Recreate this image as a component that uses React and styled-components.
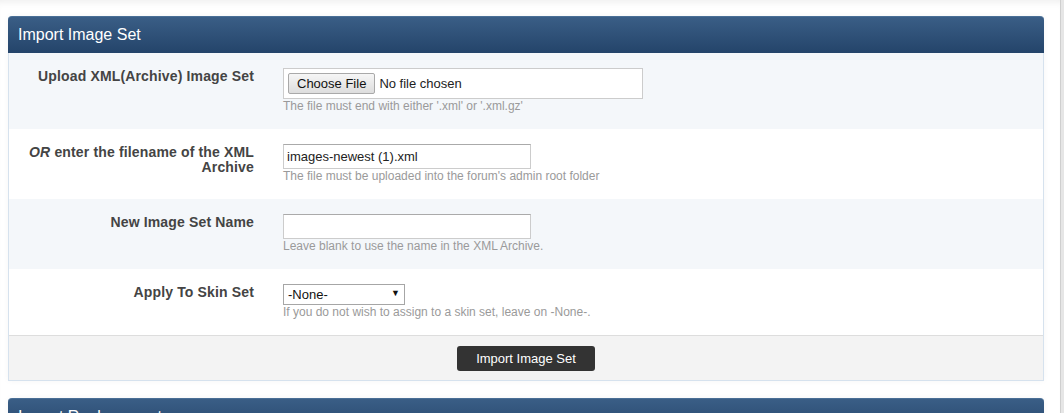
import styled, { createGlobalStyle } from "styled-components";

const GlobalStyle = createGlobalStyle`
  html, body {
    margin: 0;
    padding: 0;
    background: #fff;
    font-family: "Liberation Sans", Arial, sans-serif;
    color: #333;
  }
  * {
    box-sizing: border-box;
  }
`;

const Page = styled.div`
  display: flex;
  height: 413px;
  overflow: hidden;
`;

const Main = styled.main`
  flex: 1;
  padding: 16px 16px 0 8px;
  box-shadow: inset 0 7px 7px -5px rgba(0, 0, 0, 0.07);
`;

const ScrollStrip = styled.div`
  width: 4px;
  background: #e6e6e6;
  border-left: 1px solid #cfcfcf;
`;

const Panel = styled.section`
  border: 1px solid #d6e2ee;
  border-top: 0;
  border-radius: 4px 4px 0 0;
  margin-bottom: 17px;
  box-shadow: 0 0 6px rgba(0, 0, 0, 0.04);
  background: #fff;
`;

const PanelHeader = styled.h2`
  margin: 0 -1px;
  height: 37px;
  padding: 0 10px;
  display: flex;
  align-items: center;
  font-size: 16px;
  font-weight: normal;
  color: #fff;
  border-radius: 4px 4px 0 0;
  border-top: 1px solid #4a6f96;
  background: linear-gradient(#3a5e86, #24446a);
`;

const Row = styled.div`
  display: grid;
  grid-template-columns: 260px 1fr;
  background: ${(p) => (p.$alt ? "#f4f7fa" : "#fff")};
  padding: 15px 0;
`;

const Label = styled.div`
  text-align: right;
  padding: 1px 15px 0 0;
  font-size: 14px;
  line-height: 15px;
  font-weight: bold;
  letter-spacing: 0.15px;
  color: #444;

  em {
    font-style: italic;
  }
`;

const Field = styled.div`
  padding-left: 14px;
`;

const Desc = styled.div`
  font-size: 12px;
  line-height: 15px;
  color: #9a9a9a;
`;

const FileBox = styled.div`
  width: 360px;
  height: 31px;
  border: 1px solid #ccc;
  background: #fff;
  display: flex;
  align-items: center;
  padding: 0 4px;
  font-size: 13px;
  color: #222;
`;

const ChooseButton = styled.span`
  display: inline-flex;
  align-items: center;
  height: 21px;
  padding: 0 8px;
  border: 1px solid #a9a9a9;
  border-radius: 2px;
  background: linear-gradient(#f6f6f6, #dddddd);
  color: #111;
  margin-right: 4px;
`;

const TextInput = styled.input`
  display: block;
  width: 248px;
  height: 25px;
  border: 1px solid #ccc;
  border-top-color: #aaa;
  padding: 0 3px;
  font-family: inherit;
  font-size: 13px;
  color: #222;
  background: #fff;
  outline: none;
`;

const SelectWrap = styled.div`
  position: relative;
  width: 122px;

  &::after {
    content: "▼";
    position: absolute;
    right: 5px;
    top: 4px;
    font-size: 9px;
    color: #111;
    pointer-events: none;
  }
`;

const Select = styled.select`
  appearance: none;
  display: block;
  width: 100%;
  height: 21px;
  border: 1px solid #a6a6a6;
  border-radius: 0;
  padding: 0 4px;
  font-family: inherit;
  font-size: 13px;
  color: #111;
  background: #fff;
`;

const Footer = styled.div`
  border-top: 1px solid #ddd;
  background: #f3f3f3;
  height: 45px;
  display: flex;
  align-items: center;
  justify-content: center;
`;

const SubmitButton = styled.button`
  height: 25px;
  padding: 0 19px;
  border: 0;
  border-radius: 3px;
  background: #333;
  color: #fff;
  font-family: inherit;
  font-size: 13px;
`;

export default function App() {
  return (
    <>
      <GlobalStyle />
      <Page>
        <Main>
          <Panel>
            <PanelHeader>Import Image Set</PanelHeader>
            <Row $alt>
              <Label>Upload XML(Archive) Image Set</Label>
              <Field>
                <FileBox>
                  <ChooseButton>Choose File</ChooseButton>
                  No file chosen
                </FileBox>
                <Desc>The file must end with either '.xml' or '.xml.gz'</Desc>
              </Field>
            </Row>
            <Row>
              <Label>
                <em>OR</em> enter the filename of the XML Archive
              </Label>
              <Field>
                <TextInput defaultValue="images-newest (1).xml" />
                <Desc>The file must be uploaded into the forum's admin root folder</Desc>
              </Field>
            </Row>
            <Row $alt>
              <Label>New Image Set Name</Label>
              <Field>
                <TextInput defaultValue="" />
                <Desc>Leave blank to use the name in the XML Archive.</Desc>
              </Field>
            </Row>
            <Row>
              <Label>Apply To Skin Set</Label>
              <Field>
                <SelectWrap>
                  <Select defaultValue="none">
                    <option value="none">-None-</option>
                  </Select>
                </SelectWrap>
                <Desc>If you do not wish to assign to a skin set, leave on -None-.</Desc>
              </Field>
            </Row>
            <Footer>
              <SubmitButton>Import Image Set</SubmitButton>
            </Footer>
          </Panel>
          <Panel>
            <PanelHeader>Import Replacements</PanelHeader>
          </Panel>
        </Main>
        <ScrollStrip />
      </Page>
    </>
  );
}
